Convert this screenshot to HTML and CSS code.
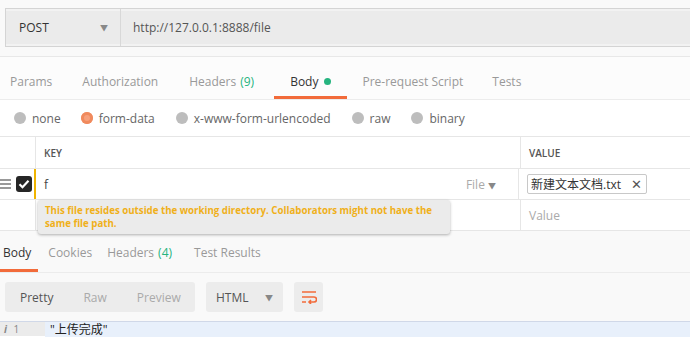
FILE: index.html
```html
<!DOCTYPE html>
<html lang="en">
<head>
  <meta charset="UTF-8">
  <title>POST http://127.0.0.1:8888/file</title>
  <link rel="stylesheet" href="styles.css">
</head>
<body>
  <div class="url-bar">
    <div class="url-box">
      <div class="method">POST <span class="caret">&#9660;</span></div>
      <div class="url">http://127.0.0.1:8888/file</div>
    </div>
  </div>

  <div class="req-tabs">
    <span class="tab">Params</span>
    <span class="tab">Authorization</span>
    <span class="tab">Headers <em class="count">(9)</em></span>
    <span class="tab active">Body <i class="dot"></i></span>
    <span class="tab">Pre-request Script</span>
    <span class="tab">Tests</span>
  </div>

  <div class="body-types">
    <label class="radio"><i class="circle"></i>none</label>
    <label class="radio"><i class="circle on"></i>form-data</label>
    <label class="radio"><i class="circle"></i>x-www-form-urlencoded</label>
    <label class="radio"><i class="circle"></i>raw</label>
    <label class="radio"><i class="circle"></i>binary</label>
  </div>

  <div class="kv">
    <div class="kv-row head">
      <div class="handle"></div>
      <div class="key">KEY</div>
      <div class="value">VALUE</div>
    </div>
    <div class="kv-row">
      <div class="handle">
        <span class="drag"><i></i><i></i><i></i></span>
        <span class="check">
          <svg width="12" height="10" viewBox="0 0 12 10"><path d="M1.5 5.2l3 3L10.5 1.8" fill="none" stroke="#fff" stroke-width="2.2"/></svg>
        </span>
      </div>
      <div class="key focused">f <span class="type">File <span class="caret">&#9660;</span></span></div>
      <div class="value"><span class="chip">新建文本文档.txt <span class="x">&#10005;</span></span></div>
    </div>
    <div class="kv-row">
      <div class="handle"></div>
      <div class="key"></div>
      <div class="value placeholder">Value</div>
    </div>
    <div class="tooltip">This file resides outside the working directory. Collaborators might not have the same file path.</div>
  </div>

  <div class="res-tabs">
    <span class="tab active">Body</span>
    <span class="tab">Cookies</span>
    <span class="tab">Headers <em class="count">(4)</em></span>
    <span class="tab">Test Results</span>
  </div>

  <div class="res-toolbar">
    <div class="seg">
      <span class="on">Pretty</span>
      <span>Raw</span>
      <span>Preview</span>
    </div>
    <div class="select">HTML <span class="caret">&#9660;</span></div>
    <div class="wrap-btn">
      <svg width="16" height="14" viewBox="0 0 16 14"><path d="M1 2h14M1 7h12a2.5 2.5 0 0 1 0 5H8M10 10l-2 2 2 2M1 12h4" fill="none" stroke="#f26b3a" stroke-width="1.6"/></svg>
    </div>
  </div>

  <div class="code">
    <div class="gutter"><span class="info">i</span> 1</div>
    <div class="line">"上传完成"</div>
  </div>
</body>
</html>
```

FILE: styles.css
```css
body {
  margin: 0;
  font-family: 'Open Sans', 'Noto Sans CJK SC', sans-serif;
  font-size: 12px;
  color: #505050;
  background: #f9f9f9;
  overflow: hidden;
}

.caret {
  font-size: 8px;
  color: #888;
}

.url-bar {
  padding: 8px 0 9px 5px;
  border-bottom: 1px solid #e8e8e8;
}

.url-box {
  display: flex;
  height: 37px;
  background: #ebebeb;
  border: 1px solid #d4d4d4;
  border-right: none;
  box-shadow: inset 0 2px 0 #f2f2f2, inset 0 -2px 0 #f2f2f2;
}

.method {
  width: 115px;
  display: flex;
  align-items: center;
  justify-content: space-between;
  padding: 0 12px 0 13px;
  box-sizing: border-box;
  border-right: 1px solid #d8d8d8;
  color: #333;
}

.url {
  display: flex;
  align-items: center;
  padding-left: 12px;
  color: #555;
}

.req-tabs {
  display: flex;
  height: 42px;
  background: #fcfcfc;
  border-bottom: 1px solid #ececec;
}

.tab {
  display: flex;
  align-items: center;
  padding: 0 16px 0 10px;
  font-size: 12px;
  color: #999;
  position: relative;
}

.req-tabs .tab { padding-top: 7px; }
.req-tabs .tab:nth-child(2) { padding-left: 14px; }
.req-tabs .tab:nth-child(3) { padding-left: 15px; padding-right: 20px; }
.req-tabs .tab:nth-child(4) { padding-left: 16px; }
.req-tabs .tab:nth-child(5) { padding-left: 15px; }
.req-tabs .tab:nth-child(6) { padding-left: 13px; }

.tab.active {
  color: #333;
}

.tab.active::after {
  content: "";
  position: absolute;
  left: 0;
  right: 0;
  bottom: 0;
  height: 3px;
  background: #f26b3a;
}

.count {
  font-style: normal;
  color: #26b47f;
  margin-left: 4px;
}

.dot {
  width: 7px;
  height: 7px;
  border-radius: 50%;
  background: #26b47f;
  margin-left: 6px;
}

.body-types {
  display: flex;
  height: 36px;
  align-items: center;
  background: #fff;
  border-bottom: 1px solid #e6e6e6;
  padding-left: 14px;
}

.radio {
  display: flex;
  align-items: center;
  margin-right: 20px;
  color: #666;
  font-size: 12px;
}

.radio:nth-child(2) { margin-right: 21px; }
.radio:nth-child(3) { margin-right: 21px; }
.radio:nth-child(4) { margin-right: 21px; }

.circle {
  width: 12px;
  height: 12px;
  border-radius: 50%;
  background: #bdbdbd;
  margin-right: 6px;
}

.circle.on {
  background: #f7a07c;
  box-shadow: inset 0 0 0 3px #f08a5d;
}

.kv {
  position: relative;
  background: #fff;
}

.kv-row {
  display: flex;
  height: 30px;
  border-bottom: 1px solid #e6e6e6;
}

.kv-row.head {
  height: 31px;
}

.handle {
  width: 35px;
  display: flex;
  align-items: center;
  border-right: 1px solid #e6e6e6;
}

.key {
  width: 485px;
  display: flex;
  align-items: center;
  padding: 0 22px 0 8px;
  box-sizing: border-box;
  border-right: 1px solid #e6e6e6;
  color: #444;
}

.value {
  flex: 1;
  display: flex;
  align-items: center;
  padding-left: 8px;
}

.head .key,
.head .value {
  font-size: 10px;
  font-weight: 600;
  color: #555;
}

.key.focused {
  border-left: 2px solid #f0b400;
  margin-left: -2px;
  padding-left: 8px;
}

.type {
  margin-left: auto;
  color: #aaa;
}

.drag {
  display: flex;
  flex-direction: column;
  gap: 2px;
  width: 11px;
  margin-right: 5px;
}

.drag i {
  height: 2px;
  background: #999;
}

.check {
  width: 16px;
  height: 16px;
  border-radius: 3px;
  background: #262626;
  display: flex;
  align-items: center;
  justify-content: center;
}

.chip {
  display: flex;
  align-items: center;
  height: 18px;
  padding: 0 4px 0 3px;
  border: 1px solid #c8c8c8;
  border-radius: 2px;
  color: #333;
  font-size: 12px;
}

.chip .x {
  margin-left: 10px;
  color: #555;
  font-size: 13px;
}

.placeholder {
  color: #aaa;
}

.tooltip {
  position: absolute;
  left: 38px;
  top: 63px;
  width: 398px;
  padding: 4px 7px 4px 7px;
  background: #ebebeb;
  border-radius: 3px;
  box-shadow: 0 1px 3px rgba(0, 0, 0, 0.3);
  color: #f0b01a;
  font-size: 9.7px;
  font-weight: 700;
  line-height: 13px;
}

.res-tabs {
  display: flex;
  height: 40px;
  margin-top: 1px;
  border-bottom: 1px solid #ececec;
}

.res-tabs .tab {
  padding: 0 8px 0 10px;
}

.res-tabs .tab:first-child { padding: 0 7px 0 3px; }
.res-tabs .tab:nth-child(3) { padding-left: 7px; }
.res-tabs .tab:nth-child(4) { padding-left: 14px; }

.res-toolbar {
  display: flex;
  align-items: center;
  height: 48px;
  padding-left: 5px;
  gap: 11px;
}

.seg {
  display: flex;
  height: 30px;
  background: #ececec;
  border-radius: 3px;
  width: 190px;
}

.seg span {
  display: flex;
  align-items: center;
  padding: 0 17px 0 13px;
  color: #aaa;
  font-size: 12px;
}

.seg span.on {
  color: #555;
  padding: 0 17px 0 15px;
}

.select {
  display: flex;
  align-items: center;
  justify-content: space-between;
  width: 77px;
  height: 30px;
  padding: 0 10px 0 10px;
  box-sizing: border-box;
  background: #ececec;
  border-radius: 3px;
  color: #555;
  font-size: 12px;
}

.wrap-btn {
  width: 29px;
  height: 30px;
  background: #ececec;
  border-radius: 3px;
  display: flex;
  align-items: center;
  justify-content: center;
}

.code {
  display: flex;
  height: 27px;
  background: #fff;
}

.gutter {
  width: 45px;
  height: 15px;
  background: #ebebeb;
  color: #888;
  font-size: 10px;
  padding-left: 4px;
  box-sizing: border-box;
  border-top: 1px solid #d0d8e8;
}

.info {
  font-style: italic;
  font-weight: 700;
  margin-right: 4px;
}

.line {
  flex: 1;
  height: 15px;
  line-height: 15px;
  padding-left: 5px;
  background: #e8f0fb;
  border-top: 1px solid #d0d8e8;
  color: #222;
  font-size: 12px;
}
```
